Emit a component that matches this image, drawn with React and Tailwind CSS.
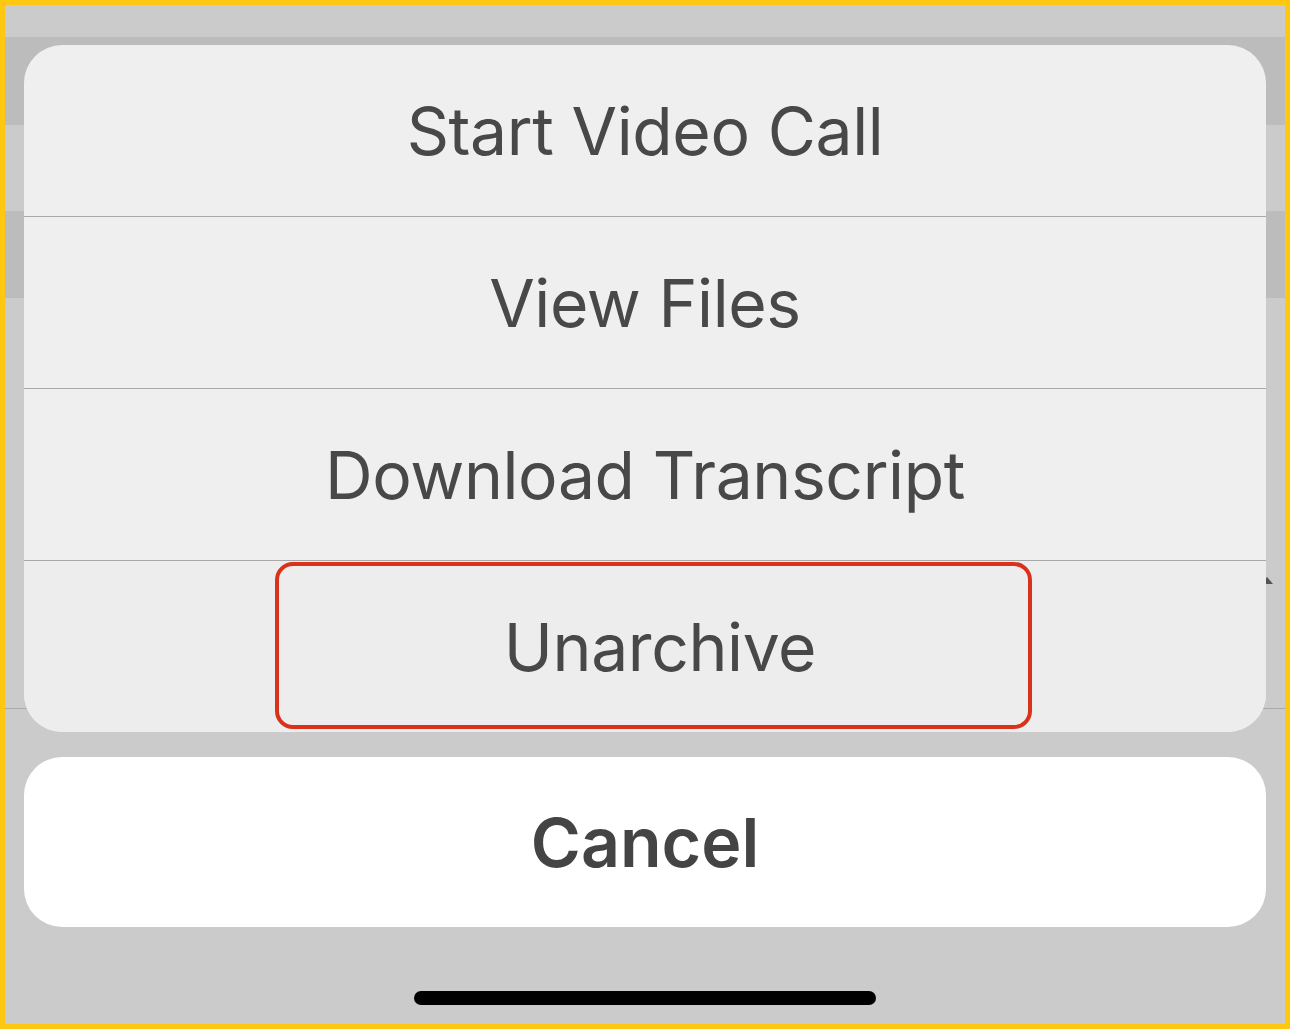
import React from 'react';

const actions = ['Start Video Call', 'View Files', 'Download Transcript'];

function Row({ children, className = '' }) {
  return (
    <div className={`flex h-[171px] items-center justify-center ${className}`}>
      {children}
    </div>
  );
}

export default function App() {
  return (
    <div className="h-[1029px] w-[1290px] bg-[#fdc80f] p-[5px] font-['Inter','Liberation_Sans',sans-serif]">
      <div className="relative h-full w-full overflow-hidden bg-[#cbcbcb]">
        {/* dimmed list behind the sheet */}
        <div className="absolute inset-0 flex flex-col">
          <div className="h-[32px] bg-[#cbcbcb]" />
          <div className="h-[88px] bg-[#bcbcbc]" />
          <div className="h-[86px] bg-[#cbcbcb]" />
          <div className="h-[87px] bg-[#bcbcbc]" />
          <div className="h-[410px] bg-[#cbcbcb]" />
          <div className="h-px bg-[#a9a9a9]" />
        </div>
        <div className="absolute right-[12px] top-[572px] h-0 w-0 border-x-[6px] border-b-[7px] border-x-transparent border-b-[#555]" />

        <div className="relative flex flex-col px-[19px] pt-[40px]">
          <div className="overflow-hidden rounded-[38px] bg-[#efefef]">
            {actions.map((label) => (
              <div key={label}>
                <Row>
                  <span className="text-[66px] leading-none tracking-[-0.4px] text-[#484848]">{label}</span>
                </Row>
                <div className="h-px bg-[#a8a8a8]" />
              </div>
            ))}
            <Row className="relative h-[170px] bg-[#ededed]">
              <span className="relative translate-x-[15px] text-[66px] leading-none tracking-[-0.4px] text-[#484848]">
                Unarchive
              </span>
              <div className="absolute left-[251px] top-[1px] h-[167px] w-[757px] rounded-[18px] border-[4px] border-[#d9311a]" />
            </Row>
          </div>

          <div className="mt-[25px] flex h-[170px] items-center justify-center rounded-[38px] bg-white">
            <span className="text-[68px] font-semibold leading-none text-[#444]">Cancel</span>
          </div>

          <div className="mt-[64px] flex justify-center">
            <div className="h-[14px] w-[462px] rounded-full bg-black" />
          </div>
        </div>
      </div>
    </div>
  );
}
